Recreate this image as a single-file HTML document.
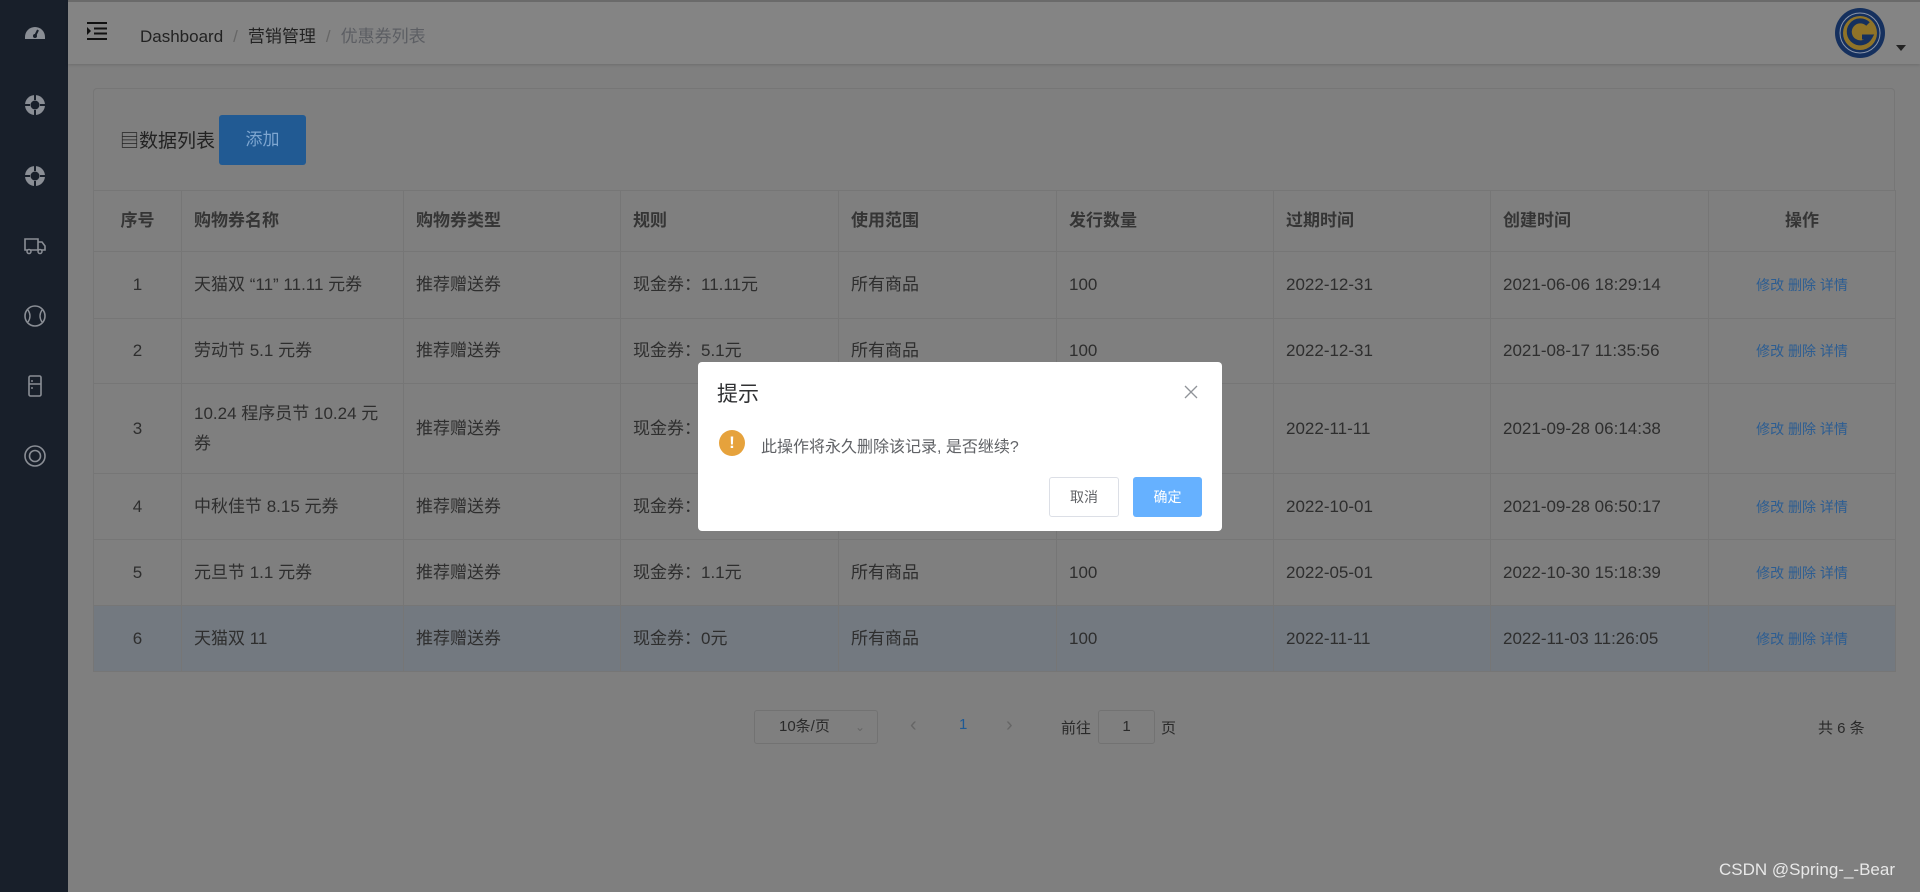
<!DOCTYPE html>
<html><head><meta charset="utf-8">
<style>
*{margin:0;padding:0;box-sizing:border-box}
body{width:1920px;height:892px;overflow:hidden;background:#7f7f7f;font-family:"Liberation Sans","Noto Sans CJK SC",sans-serif;position:relative;color:#2e2e2e}
.side{position:absolute;left:0;top:0;width:68px;height:892px;background:#181f2a}
.side svg{position:absolute;left:23px}
.hdr{position:absolute;left:68px;top:0;right:0;height:64px;background:#848484;border-top:2px solid #6a6a6a;box-shadow:0 1px 3px rgba(0,0,0,.15)}
.bc{position:absolute;left:140px;top:20px;font-size:17px;color:#222}
.bc .s{color:#666;margin:0 10px}
.bc .l{color:#5c5e63}
.card{position:absolute;left:93px;top:88px;width:1802px;height:102px;border:1px solid #767676;border-bottom:none;border-radius:4px 4px 0 0}
.title{position:absolute;left:120px;top:126px;font-size:19px;color:#222}
.btn{position:absolute;left:219px;top:115px;width:87px;height:50px;background:#215a93;border-radius:3px;color:#7ea6d0;font-size:17px;text-align:center;line-height:50px}
table{position:absolute;left:93px;top:190px;width:1802px;border-collapse:collapse;font-size:17px;table-layout:fixed}
td,th{border:1px solid #767676;padding:0 12px;text-align:left;color:#2e2e2e;font-weight:normal;vertical-align:middle;line-height:22px}
th{font-weight:bold;color:#353535;height:61px}
td.c,th.c{text-align:center}
tr.h td{background:#737980}
.op{color:#2c5d92;font-size:14px;text-align:center}
.pg{position:absolute;font-size:16px;color:#2a2a2a}
.dlg{position:absolute;left:698px;top:362px;width:524px;height:169px;background:#fff;border-radius:4px}
</style></head><body>
<div class="side">
<svg style="top:21px" width="24" height="20" viewBox="0 0 24 20"><path d="M2 16a10 10 0 0 1 20 0v2H2z" fill="#8a8e95"/><circle cx="12" cy="15" r="2" fill="#181f2a"/><path d="M12 15l3-6" stroke="#181f2a" stroke-width="2"/></svg>
<svg style="top:93px" width="24" height="24" viewBox="0 0 24 24"><circle cx="12" cy="12" r="10" fill="#8a8e95"/><circle cx="12" cy="12" r="4.5" fill="#181f2a"/><path d="M12 2v5M12 17v5M2 12h5M17 12h5" stroke="#181f2a" stroke-width="2"/></svg>
<svg style="top:164px" width="24" height="24" viewBox="0 0 24 24"><circle cx="12" cy="12" r="10" fill="#8a8e95"/><circle cx="12" cy="12" r="4.5" fill="#181f2a"/><path d="M12 2v5M12 17v5M2 12h5M17 12h5" stroke="#181f2a" stroke-width="2"/></svg>
<svg style="top:236px" width="24" height="20" viewBox="0 0 24 20"><path d="M2 3h13v11H2zM15 6h4l3 4v4h-7" fill="none" stroke="#8a8e95" stroke-width="1.6"/><circle cx="6" cy="15.5" r="2" fill="#181f2a" stroke="#8a8e95" stroke-width="1.5"/><circle cx="17" cy="15.5" r="2" fill="#181f2a" stroke="#8a8e95" stroke-width="1.5"/></svg>
<svg style="top:304px" width="24" height="24" viewBox="0 0 24 24"><circle cx="12" cy="12" r="10" fill="none" stroke="#8a8e95" stroke-width="1.6"/><path d="M5 6q4 6 0 12M19 6q-4 6 0 12" fill="none" stroke="#8a8e95" stroke-width="1.4"/></svg>
<svg style="top:374px" width="24" height="24" viewBox="0 0 24 24"><rect x="6" y="2" width="12" height="20" rx="1.5" fill="none" stroke="#8a8e95" stroke-width="1.6"/><path d="M6 10h12M9 6v2M9 13v2" stroke="#8a8e95" stroke-width="1.4"/></svg>
<svg style="top:444px" width="24" height="24" viewBox="0 0 24 24"><circle cx="12" cy="12" r="10" fill="none" stroke="#8a8e95" stroke-width="1.6"/><circle cx="12" cy="12" r="5.5" fill="none" stroke="#8a8e95" stroke-width="1.6"/></svg>
</div>
<div class="hdr">
<svg style="position:absolute;left:19px;top:20px" width="20" height="18" viewBox="0 0 20 18"><path d="M0 1h20M7 6.5h13M7 11.5h13M0 17h20" stroke="#111" stroke-width="2"/><path d="M0 5l4 4-4 4z" fill="#111"/></svg>
<div class="bc" style="left:72px">Dashboard<span class="s">/</span>营销管理<span class="s">/</span><span class="l">优惠券列表</span></div>
<svg style="position:absolute;left:1766px;top:5px" width="52" height="52" viewBox="0 0 52 52"><circle cx="26" cy="26" r="25" fill="#15305e"/><circle cx="26" cy="26" r="20" fill="none" stroke="#8a95aa" stroke-width="1"/><circle cx="26" cy="26" r="17" fill="#8f7328"/><path d="M34 17a11 11 0 1 0 2 13h-8" fill="none" stroke="#15305e" stroke-width="5"/></svg>
<div style="position:absolute;left:1828px;top:43px;border:5px solid transparent;border-top:6px solid #222"></div>
</div>
<div class="card"></div>
<div class="title">&#9636;数据列表</div>
<div class="btn">添加</div>
<table>
<colgroup><col style="width:88px"><col style="width:222px"><col style="width:217px"><col style="width:218px"><col style="width:218px"><col style="width:217px"><col style="width:217px"><col style="width:218px"><col style="width:187px"></colgroup>
<tr><th class="c">序号</th><th>购物券名称</th><th>购物券类型</th><th>规则</th><th>使用范围</th><th>发行数量</th><th>过期时间</th><th>创建时间</th><th class="c">操作</th></tr>
<tr style="height:67px"><td class="c">1</td><td>天猫双 “11” 11.11 元券</td><td>推荐赠送券</td><td>现金券：11.11元</td><td>所有商品</td><td>100</td><td>2022-12-31</td><td>2021-06-06 18:29:14</td><td class="op">修改 删除 详情</td></tr>
<tr style="height:65px"><td class="c">2</td><td>劳动节 5.1 元券</td><td>推荐赠送券</td><td>现金券：5.1元</td><td>所有商品</td><td>100</td><td>2022-12-31</td><td>2021-08-17 11:35:56</td><td class="op">修改 删除 详情</td></tr>
<tr style="height:90px"><td class="c">3</td><td style="line-height:30px">10.24 程序员节 10.24 元<br>券</td><td>推荐赠送券</td><td>现金券：10.24元</td><td>所有商品</td><td>100</td><td>2022-11-11</td><td>2021-09-28 06:14:38</td><td class="op">修改 删除 详情</td></tr>
<tr style="height:66px"><td class="c">4</td><td>中秋佳节 8.15 元券</td><td>推荐赠送券</td><td>现金券：8.15元</td><td>所有商品</td><td>100</td><td>2022-10-01</td><td>2021-09-28 06:50:17</td><td class="op">修改 删除 详情</td></tr>
<tr style="height:66px"><td class="c">5</td><td>元旦节 1.1 元券</td><td>推荐赠送券</td><td>现金券：1.1元</td><td>所有商品</td><td>100</td><td>2022-05-01</td><td>2022-10-30 15:18:39</td><td class="op">修改 删除 详情</td></tr>
<tr class="h" style="height:66px"><td class="c">6</td><td>天猫双 11</td><td>推荐赠送券</td><td>现金券：0元</td><td>所有商品</td><td>100</td><td>2022-11-11</td><td>2022-11-03 11:26:05</td><td class="op">修改 删除 详情</td></tr>
</table>
<div class="pg" style="left:754px;top:710px;width:124px;height:34px;border:1px solid #727272;border-radius:3px;font-size:15px;line-height:32px;padding-left:24px">10条/页<span style="position:absolute;right:12px;top:0;color:#666;font-size:12px">&#8964;</span></div>
<div class="pg" style="left:910px;top:714px;color:#666;font-size:20px">&#8249;</div>
<div class="pg" style="left:959px;top:716px;color:#1f5a94;font-size:15px">1</div>
<div class="pg" style="left:1006px;top:714px;color:#666;font-size:20px">&#8250;</div>
<div class="pg" style="left:1061px;top:717px;font-size:15px">前往</div>
<div class="pg" style="left:1098px;top:710px;width:57px;height:34px;border:1px solid #727272;border-radius:3px;text-align:center;line-height:32px;font-size:15px">1</div>
<div class="pg" style="left:1161px;top:717px;font-size:15px">页</div>
<div class="pg" style="left:1818px;top:717px;font-size:15px">共 6 条</div>
<div class="dlg">
<div style="position:absolute;left:19px;top:16px;font-size:21px;color:#303133">提示</div>
<svg style="position:absolute;left:486px;top:23px" width="14" height="14" viewBox="0 0 14 14"><path d="M1 1l12 12M13 1L1 13" stroke="#909399" stroke-width="1.3"/></svg>
<div style="position:absolute;left:21px;top:68px;width:26px;height:26px;border-radius:50%;background:#e6a23c;color:#fff;font-weight:bold;font-size:17px;text-align:center;line-height:26px">!</div>
<div style="position:absolute;left:63px;top:71px;font-size:16px;color:#606266">此操作将永久删除该记录, 是否继续?</div>
<div style="position:absolute;left:351px;top:115px;width:70px;height:40px;border:1px solid #dcdfe6;border-radius:3px;text-align:center;line-height:38px;font-size:14px;color:#606266">取消</div>
<div style="position:absolute;left:435px;top:115px;width:69px;height:40px;background:#66b1ff;border-radius:3px;text-align:center;line-height:40px;font-size:14px;color:#fff">确定</div>
</div>
<div style="position:absolute;left:1719px;top:860px;font-size:17px;color:#e8e8e8">CSDN @Spring-_-Bear</div>
</body></html>
